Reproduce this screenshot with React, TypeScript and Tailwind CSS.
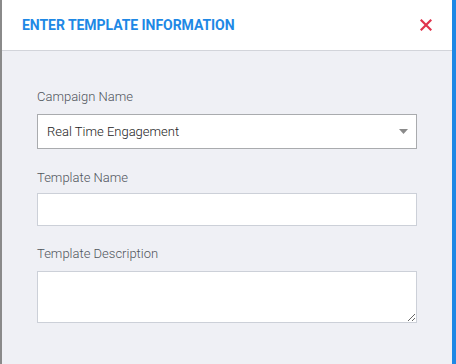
export default function App() {
  return (
    <div className="flex h-[364px] w-[456px] bg-[#eff0f5]" style={{ fontFamily: "Roboto, 'Liberation Sans', sans-serif" }}>
      {/* left edge */}
      <div className="w-[2px] bg-[#8a8a8a]" />

      <div className="flex flex-1 flex-col">
        {/* header */}
        <div className="flex h-[51px] items-center justify-between border-b border-[#d2d4da] bg-white pl-[20px] pr-[20px]">
          <h1 className="pt-[1px] text-[14px] font-bold tracking-[-0.05px] text-[#1e88e5]">ENTER TEMPLATE INFORMATION</h1>
          <button className="text-[#e0344d]">
            <svg width="12" height="12" viewBox="0 0 12 12">
              <path d="M1.5 1.5 L10.5 10.5 M10.5 1.5 L1.5 10.5" stroke="currentColor" strokeWidth="2.2" strokeLinecap="square" />
            </svg>
          </button>
        </div>

        {/* form */}
        <div className="flex flex-col pl-[35px] pr-[35px] pt-[38px]">
          <label className="text-[13px] font-light leading-[16px] text-[#50555c]">Campaign Name</label>
          <div className="mt-[9px] flex h-[35px] items-center justify-between border border-[#a9abae] bg-white pl-[9px] pr-[8px]">
            <span className="text-[13px] font-light text-[#222]">Real Time Engagement</span>
            <svg width="9" height="5" viewBox="0 0 9 5">
              <path d="M0 0 H9 L4.5 5 Z" fill="#8a8a8a" />
            </svg>
          </div>

          <label className="mt-[21px] text-[13px] font-light leading-[16px] text-[#50555c]">Template Name</label>
          <div className="mt-[7px] h-[33px] border border-[#ccd0d8] bg-white" />

          <label className="mt-[20px] text-[13px] font-light leading-[16px] text-[#50555c]">Template Description</label>
          <textarea className="mt-[9px] h-[52px] resize-y border border-[#ccd0d8] bg-white outline-none" />
        </div>
      </div>

      {/* right edge */}
      <div className="w-[4px] bg-[#1e88e5]" />
    </div>
  );
}
